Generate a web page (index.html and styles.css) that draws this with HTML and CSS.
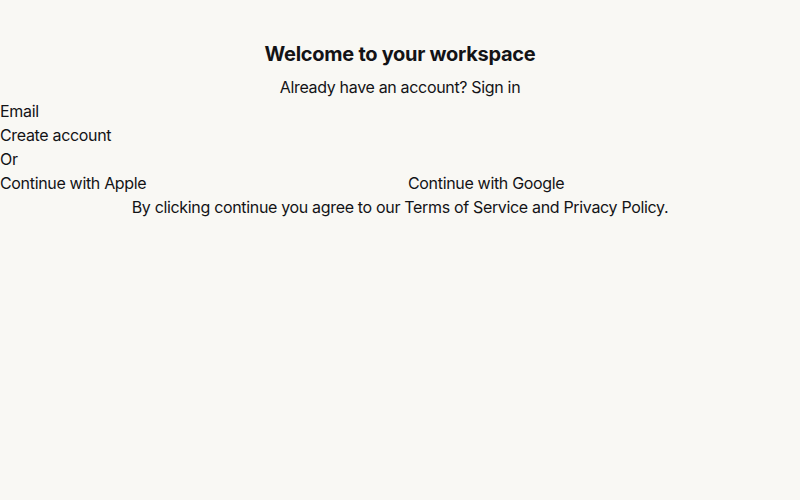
FILE: index.html
```html
<!DOCTYPE html>
<html lang="en">
<head>
<meta charset="utf-8">
<title>Welcome</title>
<link rel="stylesheet" href="styles.css">
</head>
<body>
<main class="page">
  <header class="head">
    <h1 class="title">Welcome to your workspace</h1>
    <p class="sub">Already have an account? <a class="link" href="#">Sign in</a></p>
  </header>
  <form class="form">
    <label class="row">Email</label>
    <div class="row">Create account</div>
    <div class="row">Or</div>
    <div class="social">
      <div class="row">Continue with Apple</div>
      <div class="row">Continue with Google</div>
    </div>
  </form>
  <p class="terms">By clicking continue you agree to our <a class="link" href="#">Terms of Service</a> and <a class="link" href="#">Privacy Policy</a>.</p>
</main>
</body>
</html>
```
FILE: styles.css
```css
html, body {
  margin: 0;
  padding: 0;
  background: #f9f8f4;
  color: #131316;
  font-family: Inter, "Liberation Sans", sans-serif;
  font-size: 16px;
  line-height: 24px;
  letter-spacing: -0.33px;
}
.page {
  padding-top: 40px;
}
.head {
  text-align: center;
}
.title {
  margin: 0 0 7px;
  font-size: 20px;
  line-height: 28px;
  font-weight: 700;
  letter-spacing: -0.28px;
}
.sub {
  margin: 0;
  line-height: 24px;
}
.link {
  color: inherit;
  text-decoration: none;
}
.form {
  margin: 0;
}
.row {
  display: block;
  line-height: 24px;
}
.social {
  display: grid;
  grid-template-columns: 1fr 1fr;
  column-gap: 16px;
}
.terms {
  margin: 0;
  text-align: center;
}
```
